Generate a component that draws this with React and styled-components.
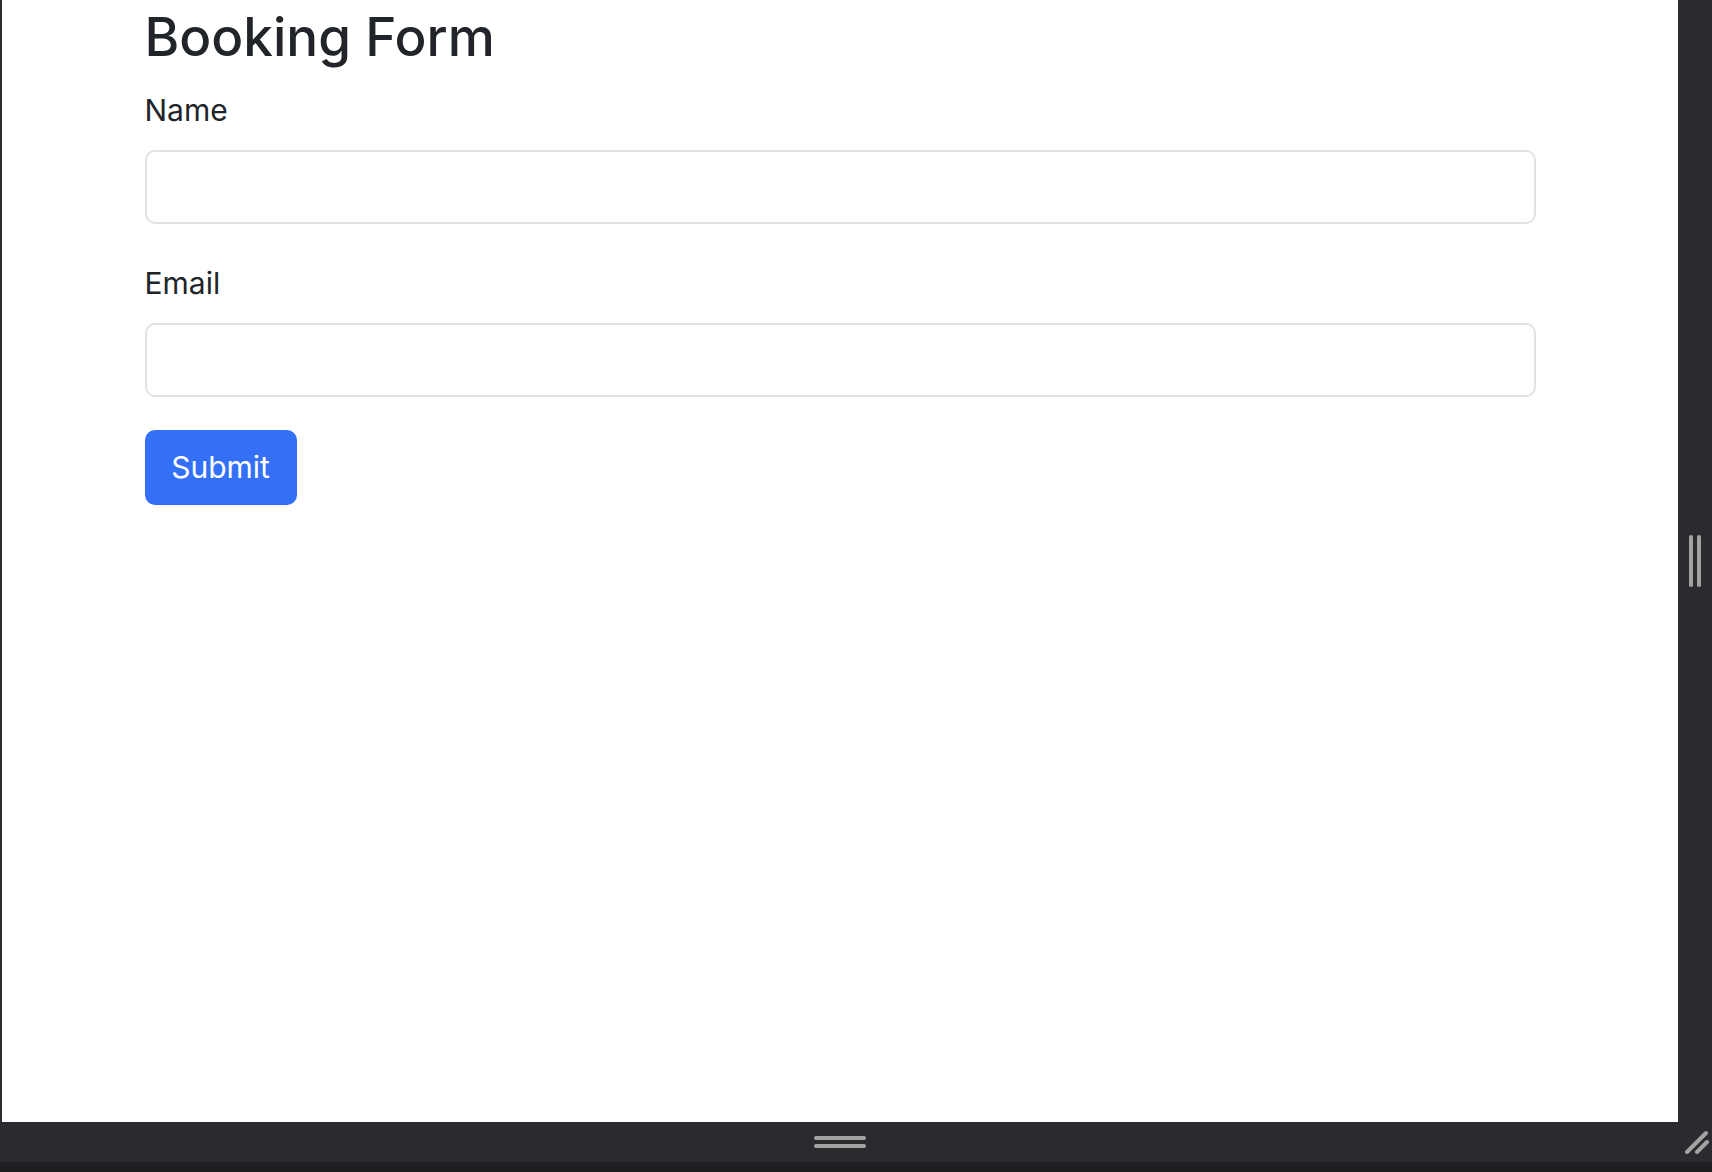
import React from 'react';
import styled, { createGlobalStyle } from 'styled-components';

const GlobalStyle = createGlobalStyle`
  html, body {
    margin: 0;
    padding: 0;
    background: #2a2b2f;
  }
  * {
    box-sizing: border-box;
  }
`;

// Outer frame: the page viewport plus the dark resize chrome around it
const Frame = styled.div`
  display: grid;
  grid-template-columns: 2px 1fr 34px;
  grid-template-rows: 1122px 40px 10px;
  width: 1712px;
  height: 1172px;
  background: #2a2b2f;
  overflow: hidden;
`;

const Viewport = styled.main`
  grid-column: 2;
  grid-row: 1;
  background: #fff;
  font-family: Inter, 'Noto Sans', sans-serif;
  color: #212529;
  overflow: hidden;
`;

const SideRail = styled.div`
  grid-column: 3;
  grid-row: 1;
  display: flex;
  align-items: center;
  justify-content: center;
  gap: 4px;
`;

const BottomRail = styled.div`
  grid-column: 2;
  grid-row: 2;
  display: flex;
  flex-direction: column;
  align-items: center;
  justify-content: center;
  gap: 4px;
`;

const CornerCell = styled.div`
  grid-column: 3;
  grid-row: 2;
  display: flex;
  align-items: flex-end;
  justify-content: flex-end;
  padding: 0 2px 8px 0;
`;

const BottomStrip = styled.div`
  grid-column: 1 / 4;
  grid-row: 3;
  background: #1f1f21;
`;

const Grip = styled.span`
  display: block;
  background: #a3a3a3;
  border-radius: 2px;
  width: ${(p) => (p.vertical ? '4px' : '52px')};
  height: ${(p) => (p.vertical ? '52px' : '4px')};
`;

const Container = styled.div`
  width: 1391px;
  margin: 0 auto;
  padding-top: 6px;
`;

const Title = styled.h1`
  margin: 0 0 18px;
  font-size: 53px;
  font-weight: 500;
  line-height: 1.2;
`;

const Field = styled.div`
  margin-bottom: 37px;
`;

const Label = styled.label`
  display: block;
  font-size: 30px;
  line-height: 1.5;
  margin-bottom: 17px;
`;

const Input = styled.input`
  display: block;
  width: 100%;
  height: 74px;
  padding: 10px 20px;
  font: inherit;
  font-size: 28px;
  border: 2px solid #dfe2e6;
  border-radius: 10px;
  outline: none;
  background: #fff;
`;

const Button = styled.button`
  display: block;
  width: 152px;
  height: 75px;
  margin-top: -4px;
  padding: 0;
  border: none;
  border-radius: 10px;
  background: #3470f5;
  color: #fff;
  font-family: Inter, 'Noto Sans', sans-serif;
  font-size: 30px;
  cursor: pointer;
`;

const App = () => {
  return (
    <>
      <GlobalStyle />
      <Frame>
        <Viewport>
          <Container>
            <Title>Booking Form</Title>
            <form onSubmit={(e) => e.preventDefault()}>
              <Field>
                <Label htmlFor="name">Name</Label>
                <Input id="name" type="text" />
              </Field>
              <Field>
                <Label htmlFor="email">Email</Label>
                <Input id="email" type="email" />
              </Field>
              <Button type="submit">Submit</Button>
            </form>
          </Container>
        </Viewport>
        <SideRail>
          <Grip vertical />
          <Grip vertical />
        </SideRail>
        <BottomRail>
          <Grip />
          <Grip />
        </BottomRail>
        <CornerCell>
          <svg width="26" height="24" viewBox="0 0 26 24">
            <path d="M3 22 L22 3 M13 22 L23 12" stroke="#a3a3a3" strokeWidth="4" strokeLinecap="round" />
          </svg>
        </CornerCell>
        <BottomStrip />
      </Frame>
    </>
  );
};

export default App;
